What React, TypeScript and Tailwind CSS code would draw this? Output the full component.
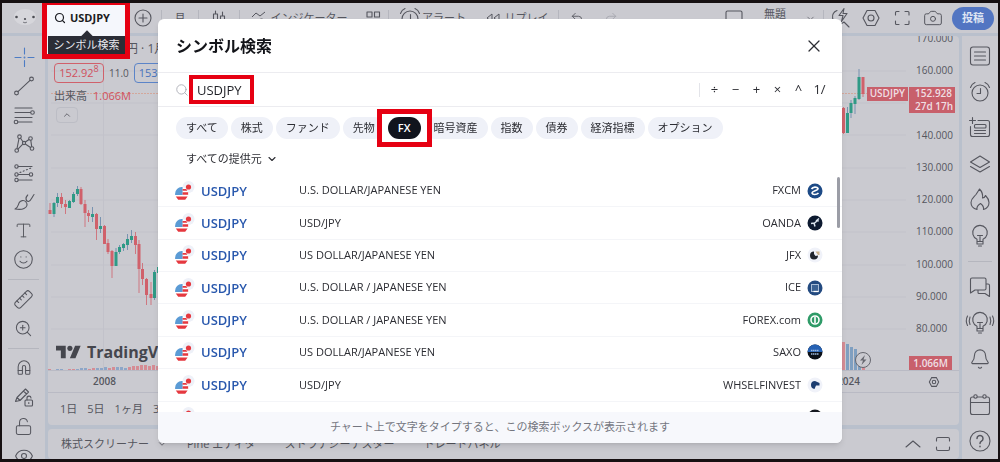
import React, { useState } from "react";
import {
  Bell,
  Camera,
  ChevronDown,
  ChevronUp,
  Eye,
  LockOpen,
  Magnet,
  Redo2,
  Ruler,
  Search,
  Smile,
  Type,
  Undo2,
  X,
  ZoomIn,
} from "lucide-react";

type IconProps = { children: React.ReactNode; className?: string };

const Icon = ({ children, className = "" }: IconProps) => (
  <svg
    width="24"
    height="24"
    viewBox="0 0 24 24"
    fill="none"
    stroke="currentColor"
    strokeWidth="1.1"
    strokeLinecap="round"
    strokeLinejoin="round"
    className={`shrink-0 ${className}`}
  >
    {children}
  </svg>
);

const hexagon = (
  <>
    <path d="M8 4.5h8l4 7.5-4 7.5H8L4 12z" />
    <circle cx="12" cy="12" r="3" />
  </>
);

const bulb = (
  <path d="M9 17.500v-2.200a7.300 7.300 0 1 1 6 0v2.200zM9 17.500V20h6v-2.500M10.500 22h3M12 17.500v-5M9.500 11.500h5" />
);

const alarm = (
  <>
    <circle cx="12" cy="13" r="8" />
    <path d="M12.5 8.5v5H9M2.5 7.5a8 8 0 0 1 4.5-5M21.5 7.5a8 8 0 0 0-4.5-5" />
  </>
);

const drawingTools = [
  {
    label: "十字カーソル",
    icon: (
      <Icon className="text-[#4d7cc4]">
        <path d="M12.5 3v6M12.5 15.5v6M3 12.5h6M16 12.5h6" />
        <circle cx="12.5" cy="12.5" r="0.4" />
      </Icon>
    ),
  },
  {
    label: "トレンドライン",
    icon: (
      <Icon>
        <circle cx="19.5" cy="5" r="1.9" />
        <circle cx="4.5" cy="19" r="1.9" />
        <path d="M6 17.6 18 6.4" />
      </Icon>
    ),
  },
  {
    label: "フィボナッチ",
    icon: (
      <Icon>
        <path d="M3 5h17M3 9.5h15.5M3 14.5h17M6 19h14" />
        <circle cx="20.5" cy="9.5" r="1.8" />
        <circle cx="4" cy="19" r="1.8" />
      </Icon>
    ),
  },
  {
    label: "パターン",
    icon: (
      <Icon>
        <circle cx="4.7" cy="18.5" r="1.8" />
        <circle cx="7.5" cy="4.7" r="1.8" />
        <circle cx="12" cy="11" r="1.6" />
        <circle cx="18.5" cy="6.5" r="1.8" />
        <circle cx="20" cy="16.5" r="1.8" />
        <path d="M5 16.7 7 6.5M8.5 6.2 11 9.7M13.4 10 17 7.5M18.8 8.3 19.7 14.7M6 17.2 10.8 12.2M13.3 12 18.5 15.5" />
      </Icon>
    ),
  },
  {
    label: "予測",
    icon: (
      <Icon>
        <circle cx="4.5" cy="5.5" r="1.7" />
        <circle cx="4.5" cy="13.5" r="1.7" />
        <circle cx="19" cy="13.5" r="1.7" />
        <circle cx="4.5" cy="19" r="1.7" />
        <path d="M6.2 5.5H20M6.2 13.5h11M6.2 19H20" />
        <path d="M8 11.5 19 7" strokeDasharray="1 2.5" />
      </Icon>
    ),
  },
  {
    label: "ブラシ",
    icon: (
      <Icon>
        <path d="M3 19c3-1 3-3.5 4-6 1-2.5 5-3.5 7-1s1 5-2 6.5S6 19.5 3 19zM14 8.5c0 2 1 3 2.5 3C19 11 20 7 22 4.5M14 9c0-1.5.7-3 1.7-4" />
      </Icon>
    ),
  },
  { label: "テキスト", icon: <Type size={19} strokeWidth={1.2} /> },
  { label: "アイコン", icon: <Smile size={21} strokeWidth={1.2} /> },
];

const measureTools = [
  { label: "ものさし", icon: <Ruler size={21} strokeWidth={1.2} className="-scale-x-100" /> },
  { label: "ズーム", icon: <ZoomIn size={19} strokeWidth={1.3} /> },
];

const lockTools = [
  { label: "マグネット", icon: <Magnet size={18} strokeWidth={1.4} className="-rotate-45" /> },
  {
    label: "描画モード",
    icon: (
      <Icon>
        <path d="M3.5 15.5 5 11.5 13.5 3l3 3L8 14.5zM11.5 5l3 3M5 11.5l3 3" />
        <rect x="13" y="14" width="7.5" height="6" rx="1" />
        <path d="M15 14v-1.7a2 2 0 0 1 4-.3M16.8 16.6v.8" />
      </Icon>
    ),
  },
  { label: "ロック", icon: <LockOpen size={19} strokeWidth={1.3} /> },
  { label: "表示", icon: <Eye size={20} strokeWidth={1.3} /> },
];

const sideTools = [
  {
    label: "ウォッチリスト",
    icon: (
      <Icon>
        <rect x="2.5" y="3" width="19" height="18" rx="2.5" />
        <path d="M6.5 8h11M6.5 12h11M6.5 16h11" />
      </Icon>
    ),
  },
  { label: "アラート", icon: <Icon>{alarm}</Icon> },
  {
    label: "データ",
    icon: (
      <Icon>
        <path d="M4.5 1.5v6M1.5 4.5h6M10 4.5h9.5a2 2 0 0 1 2 2v12a2 2 0 0 1-2 2h-15a2 2 0 0 1-2-2V10.500" />
        <rect x="6.5" y="8.5" width="11.5" height="3.5" rx="1" />
        <path d="M6.5 14.5h11M6.5 17.5h11" />
      </Icon>
    ),
  },
  {
    label: "レイヤー",
    icon: (
      <Icon>
        <path d="M12 4 21.5 10 12 15.5 2.5 10zM2.5 14.5 12 20l9.5-5.5" />
      </Icon>
    ),
  },
  {
    label: "ホットリスト",
    icon: (
      <Icon>
        <path d="M9 21.5C5 20.5 3 17.5 3 14.5c0-4 3-5.5 5-8 1-1.5 2-3 3.500-5.500C14.5 4 15 7 14.5 10c1.5 0 2.5-1 3-2.5C20 10 21 12 21 14.5c0 3.5-2 6-5.5 7 .5-2.5-1-4.500-3-6-2.500 1.500-4 3.500-3.500 6z" />
      </Icon>
    ),
  },
  { label: "アイデア", icon: <Icon>{bulb}</Icon> },
];

const socialTools = [
  {
    label: "チャット",
    icon: (
      <Icon>
        <path d="M4 3h12.5a1.5 1.5 0 0 1 1.5 1.5v9a1.5 1.5 0 0 1-1.5 1.5H7L2.500 18V4.500A1.500 1.500 0 0 1 4 3zM10 15v2.500a1 1 0 0 0 1 1h6l4.500 3V10.500a1.500 1.500 0 0 0-1.500-1.500h-2" />
      </Icon>
    ),
  },
  {
    label: "配信",
    icon: (
      <Icon className="overflow-visible">
        {bulb}
        <path d="M2 6c-1 2.500-1 5 0 7.500M-.5 5c-1.500 3-1.500 6.500 0 9.500M22 6c1 2.500 1 5 0 7.500M24.500 5c1.500 3 1.500 6.500 0 9.500" />
      </Icon>
    ),
  },
  { label: "通知", icon: <Bell size={22} strokeWidth={1.2} /> },
];

const helpTools = [
  {
    label: "カレンダー",
    icon: (
      <Icon>
        <rect x="2.5" y="4" width="19" height="17.5" rx="2" />
        <path d="M2.5 9.5h19" />
        <circle cx="7.5" cy="3.5" r="1.7" fill="#cacad0" />
        <circle cx="16.5" cy="3.5" r="1.7" fill="#cacad0" />
      </Icon>
    ),
  },
  {
    label: "ヘルプ",
    icon: (
      <Icon>
        <circle cx="12" cy="12" r="10" />
        <path d="M9 9.5a3 3 0 1 1 4.5 2.6c-1 .6-1.5 1-1.5 2.4M12 17.3v.4" strokeWidth="1.5" />
      </Icon>
    ),
  },
];

// [x, high, bodyTop, bodyBottom, low, up]
type Candle = [number, number, number, number, number, boolean];

const earlyCandles: Candle[] = [
  [50, 203, 210, 214, 214, false],
  [54, 202, 203, 214, 217, true],
  [57.5, 193, 197, 203, 207, true],
  [61.5, 193, 197, 204, 208, false],
  [65.5, 200, 204, 207, 214, false],
  [69.5, 200, 201, 208, 208, true],
  [73.5, 192, 194, 202, 203, true],
  [77.5, 186, 189, 194, 196, true],
  [81, 187, 189, 204, 205, false],
  [85, 200, 204, 213, 227, false],
  [88.5, 210, 213, 216, 222, false],
  [92.5, 207, 214, 217, 222, true],
  [96.5, 213, 214, 229, 240, false],
  [100.5, 217, 226, 229, 233, true],
  [104.5, 225, 226, 244, 244, false],
  [108, 239, 243, 252, 254, false],
  [112, 250, 251, 266, 278, false],
  [116, 248, 252, 266, 266, true],
  [119.5, 245, 247, 252, 254, true],
  [123.5, 243, 244, 248, 251, true],
  [127.5, 234, 239, 245, 250, true],
  [131.5, 230, 236, 240, 243, true],
  [135.5, 232, 236, 245, 254, false],
  [139, 240, 244, 269, 293, false],
  [142.5, 263, 269, 279, 285, false],
  [146.5, 278, 279, 295, 305, false],
  [151, 282, 294, 298, 305, false],
  [154.5, 270, 272, 298, 300, true],
  [158.5, 260, 267, 273, 285, true],
];

const lateCandles: Candle[] = [
  [843.5, 107, 108, 133, 134, false],
  [847.5, 107, 113, 133, 133, true],
  [851, 100, 103, 113, 118, true],
  [855, 96, 98, 104, 114, true],
  [859, 69, 77, 99, 100, true],
  [863, 77, 77, 94, 97, false],
];

const earlyVolumes = [2, 1, 2, 2, 1, 2, 2, 2, 3, 3, 2, 3, 3, 3, 4, 3, 4, 4, 4, 3, 4, 5, 5, 6, 6, 5, 6, 5];
const lateVolumes = [29, 27, 24, 22, 13, 5];
const gridRows = [71, 103, 135, 168, 200, 232, 265, 297, 329];

const Candles = ({ data }: { data: Candle[] }) => (
  <>
    {data.map(([x, high, top, bottom, low, up]) => (
      <g key={x} fill={up ? "#2f9a86" : "#d0616b"} stroke="none">
        <rect x={x - 0.5} y={high} width="1" height={low - high} fill={up ? "#6385a8" : "#d0616b"} opacity="0.8" />
        <rect x={x - 1.5} y={top} width="3" height={bottom - top} />
      </g>
    ))}
  </>
);

const GridLines = ({ from, to }: { from: number; to: number }) => (
  <>
    {gridRows.map((y) => (
      <path key={y} d={`M${from} ${y}H${to}`} stroke="#c2c2ca" />
    ))}
    <path d={`M${from} 93.5H${to}`} stroke="#d3a79b" strokeDasharray="2 1" />
  </>
);

// the 150 level sits behind the current price tag
const prices = ["170.000", "160.000", "", "140.000", "130.000", "120.000", "110.000", "100.000", "90.000", "80.000"];

const categories = ["すべて", "株式", "ファンド", "先物", "FX", "暗号資産", "指数", "債券", "経済指標", "オプション"];

const operators = ["÷", "−", "+", "×", "^", "1/"];

const results = [
  {
    name: "U.S. DOLLAR/JAPANESE YEN",
    source: "FXCM",
    logo: (
      <>
        <circle cx="8" cy="8" r="7.5" fill="#1d4a86" />
        <path d="M4.5 6C6 3.5 10 3.5 11 5.500c.5 2-6 2.500-6 4.500.5 2 4.500 2 6.500 0" stroke="#fff" strokeWidth="1.7" fill="none" />
      </>
    ),
  },
  {
    name: "USD/JPY",
    source: "OANDA",
    logo: (
      <>
        <circle cx="8" cy="8" r="7.5" fill="#0d1a30" />
        <path d="M4 8.500 7 8l1 3.500M7 8.500l3-2.500M9 6l3-2.500M10 4.500l1.500 2" stroke="#dbe4ee" strokeWidth="1.5" fill="none" />
      </>
    ),
  },
  {
    name: "US DOLLAR/JAPANESE YEN",
    source: "JFX",
    logo: (
      <>
        <circle cx="8" cy="8" r="7.5" fill="#f0f2f9" />
        <path d="M7 4.5a4 4 0 1 0 4 4L8.5 9 7 7z" fill="#20242c" />
        <path d="M8.5 4.5h4V8H11z" fill="#cbb28d" />
      </>
    ),
  },
  {
    name: "U.S. DOLLAR / JAPANESE YEN",
    source: "ICE",
    logo: (
      <>
        <circle cx="8" cy="8" r="7.5" fill="#234a80" />
        <rect x="4.5" y="4.5" width="7" height="7" fill="#3c6293" stroke="#a9bdd6" />
        <path d="M6.5 11.5h5" stroke="#fff" strokeWidth="1.3" />
      </>
    ),
  },
  {
    name: "U.S. DOLLAR / JAPANESE YEN",
    source: "FOREX.com",
    logo: (
      <>
        <circle cx="8" cy="8" r="7.5" fill="#2f9b68" />
        <circle cx="8" cy="8" r="4" fill="none" stroke="#fff" strokeWidth="1.6" />
        <path d="M8 5v6" stroke="#fff" strokeWidth="1.6" />
      </>
    ),
  },
  {
    name: "US DOLLAR/JAPANESE YEN",
    source: "SAXO",
    logo: (
      <>
        <circle cx="8" cy="8" r="7.5" fill="#0b1018" />
        <path d="M.5 8a7.5 7.5 0 0 1 15 0z" fill="#2662b4" />
        <path d="M4 6.5h8M4 10h8" stroke="#9db9de" strokeWidth="1.3" strokeDasharray="1.5 .5" />
      </>
    ),
  },
  {
    name: "USD/JPY",
    source: "WHSELFINVEST",
    logo: (
      <>
        <circle cx="8" cy="8" r="7.5" fill="#f0f2f9" />
        <path d="M4 8a4 4 0 0 1 4-4l4.5 2v2.5H9L7.500 12A4 4 0 0 1 4 8z" fill="#1c3d70" />
      </>
    ),
  },
  { name: "", source: "", logo: <circle cx="8" cy="8" r="7.5" fill="#15181f" /> },
];

const Flags = () => (
  <svg width="20" height="20" viewBox="0 0 20 20" className="block">
    <circle cx="13.5" cy="6" r="6" fill="#eef1f8" />
    <circle cx="13.5" cy="6" r="2.6" fill="#e5383f" />
    <circle cx="6.7" cy="12.7" r="6.6" fill="#fff" />
    <path d="M6.700 6.100a6.600 6.600 0 0 0-6.600 6.600V14h7.500V6.100z" fill="#5b9bd5" />
    <path d="M7.600 8h3.700l1 1.800H7.600zM7.600 11.200h5.500l.1 2.600H7.600zM.8 15.500h11.800l-2.400 3.200H3.200z" fill="#e5383f" />
  </svg>
);

type Tool = { label: string; icon: React.ReactNode };

const ToolList = ({ tools, wide }: { tools: Tool[]; wide?: boolean }) => (
  <div className="flex shrink-0 flex-col">
    {tools.map((tool) => (
      <button
        key={tool.label}
        aria-label={tool.label}
        className={`flex items-center justify-center ${wide ? "h-9" : "h-[29px]"}`}
      >
        {tool.icon}
      </button>
    ))}
  </div>
);

const HeaderDivider = () => <div className="h-4 w-px shrink-0 bg-[#b5b6be]" />;

const Header = () => (
  <header className="flex h-[30px] shrink-0 items-center bg-[#cacad0]">
    <div className="flex w-[46px] shrink-0 justify-center">
      <svg width="24" height="20" viewBox="0 0 24 20">
        <ellipse cx="12" cy="9" rx="11" ry="8" fill="#d6d6db" />
        <circle cx="3.5" cy="9" r="1.3" fill="#4b4c53" />
        <circle cx="20.5" cy="9" r="1.3" fill="#4b4c53" />
        <circle cx="12" cy="11" r="1.1" fill="#4b4c53" />
        <path d="M10 14c1 1 3 1 4 0" stroke="#77787f" fill="none" />
      </svg>
    </div>
    <div className="relative z-10 h-full w-[77px] shrink-0">
      <div className="absolute -left-1.5 -top-[3px] h-[59px] w-[88px] border-5 border-[#e60012] bg-[#f5f7fc]" />
      <button className="relative flex h-full items-center gap-1 pl-1.5 text-[11px] font-bold text-[#1b1c22]">
        <Search size={12} strokeWidth={2.4} />
        USDJPY
      </button>
      <div
        role="tooltip"
        className="absolute left-0 top-[33px] flex h-[18px] w-full items-center justify-center whitespace-nowrap bg-[#2b2d36] text-[11px] text-[#e8e9ee]"
      >
        <span className="absolute -top-1 h-2 w-2 rotate-45 bg-[#2b2d36]" />
        <span className="relative">シンボル検索</span>
      </div>
    </div>
    <button aria-label="比較" className="flex w-9 shrink-0 justify-center">
      <Icon>
        <circle cx="12" cy="12" r="8" />
        <path d="M12 8v8M8 12h8" />
      </Icon>
    </button>
    <HeaderDivider />
    <button className="w-9 shrink-0">月</button>
    <HeaderDivider />
    <button aria-label="ローソク足" className="flex w-10 shrink-0 justify-center">
      <Icon>
        <path d="M6.5 8h4v9h-4zM13.5 10h4v6h-4zM8.5 5v3M8.5 17v3M15.5 6v4M15.5 16v3" />
      </Icon>
    </button>
    <HeaderDivider />
    <button className="flex w-[118px] shrink-0 items-center justify-center gap-1">
      <svg width="16" height="16" viewBox="0 0 16 16" fill="none" stroke="currentColor">
        <path d="M1 7 5 3l4 3 5-4M7 12c2-4 5-4 7 0" />
      </svg>
      インジケーター
    </button>
    <button aria-label="レイアウト" className="flex w-[30px] shrink-0 justify-center">
      <Icon>
        <path d="M6 6h5v5H6zM13.5 6h5v5h-5zM6 14h5v5H6zM13.5 14h5v5h-5z" />
      </Icon>
    </button>
    <HeaderDivider />
    <button className="flex w-[86px] shrink-0 items-center justify-center">
      <Icon>{alarm}</Icon>
      アラート
    </button>
    <button className="flex w-[83px] shrink-0 items-center justify-center gap-1">
      <svg width="16" height="16" viewBox="0 0 16 16" fill="none" stroke="currentColor">
        <path d="M7 4v8L2 8zM14 4v8L9 8z" />
      </svg>
      リプレイ
    </button>
    <HeaderDivider />
    <button aria-label="元に戻す" className="flex w-9 shrink-0 justify-center">
      <Undo2 size={14} strokeWidth={1.5} />
    </button>
    <button aria-label="やり直す" className="flex w-8 shrink-0 justify-center text-[#a5a6ae]">
      <Redo2 size={14} strokeWidth={1.5} />
    </button>
    <div className="ml-auto flex shrink-0 items-center pr-1">
      <button aria-label="画面" className="flex w-9 justify-center">
        <Icon>
          <rect x="4" y="5" width="16" height="14" rx="1.5" />
        </Icon>
      </button>
      <button className="w-[46px] pb-2">無題</button>
      <button aria-label="レイアウト一覧" className="flex w-[25px] justify-center">
        <ChevronDown size={11} strokeWidth={1.5} />
      </button>
      <HeaderDivider />
      <button aria-label="クイック検索" className="flex w-[31px] justify-center">
        <Icon>
          <path d="M9 4.5a7 7 0 0 0 2 13.5c2 0 3.5-.5 5-2l5 5M16 2.5l-5 7h4l-1.5 6 5.500-8h-4z" />
        </Icon>
      </button>
      <button aria-label="設定" className="flex w-[31px] justify-center">
        <Icon>{hexagon}</Icon>
      </button>
      <button aria-label="全画面" className="flex w-[31px] justify-center">
        <Icon>
          <path d="M5.5 9V6.5a1 1 0 0 1 1-1H9M15 5.5h3a1 1 0 0 1 1 1V9M19 15v2.5a1 1 0 0 1-1 1h-3M9 18.5H6.5a1 1 0 0 1-1-1V15" />
        </Icon>
      </button>
      <button aria-label="スナップショット" className="mr-1 flex w-[31px] justify-center">
        <Camera size={20} strokeWidth={1.2} />
      </button>
      <button className="h-[23px] w-[42px] rounded-full bg-[#5275c2] font-bold text-[#dfe5f3]">投稿</button>
    </div>
  </header>
);

const Chart = () => (
  <section className="flex min-h-0 flex-1 flex-col overflow-hidden rounded-sm bg-[#cacad0]">
    <div className="relative flex min-h-0 flex-1 overflow-hidden border-b border-[#b9bac4]">
      <div className="flex min-w-0 flex-1 justify-between">
        <svg width="112" height="335" viewBox="48 36 112 335" className="shrink-0">
          <GridLines from={51} to={160} />
          <path d="M103.5 40V371" stroke="#c2c2ca" />
          {earlyVolumes.map((v, i) => (
            <rect key={i} x={48 + i * 4} y={371 - v} width="3" height={v} fill={i % 5 < 2 || i > 21 ? "#d58c94" : "#8da6c8"} />
          ))}
          <Candles data={earlyCandles} />
        </svg>
        <svg width="66" height="335" viewBox="842 36 66 335" className="shrink-0">
          <GridLines from={842} to={906} />
          {lateVolumes.map((v, i) => (
            <rect key={i} x={842 + i * 4} y={371 - v} width="3" height={v} fill={i === 0 || i === 5 ? "#d58c94" : "#7f9fc0"} />
          ))}
          <Candles data={lateCandles} />
          <circle cx="863" cy="360" r="7.5" fill="#cacad0" stroke="#66676f" />
          <path d="m865 355-5 5.5h3l-1.5 4.5 5-5.500h-3z" fill="#66676f" />
        </svg>
      </div>
      <ul className="-mt-3.5 flex h-[323px] w-[51px] shrink-0 flex-col pl-2 text-[10px]">
        {prices.map((price, index) => (
          <li key={index} className="flex flex-1 items-center">
            {price}
          </li>
        ))}
      </ul>
      <div className="absolute right-1 top-[51px] flex items-start text-[10px] font-semibold leading-[13px] text-[#efdfe3]">
        <span className="mr-px h-[14px] bg-[#c8606b] px-[3px]">USDJPY</span>
        <span className="w-[46px] bg-[#c8606b] pl-1.5">
          152.928
          <br />
          27d 17h
        </span>
      </div>
      <span className="absolute bottom-0 right-[7px] h-[14px] w-[43px] bg-[#c8606b] pr-1 text-right text-[10px] font-semibold leading-[14px] text-[#efdfe3]">
        1.066M
      </span>
      <div className="absolute left-0 top-0 flex flex-col pl-1.5">
        <h2 className="pl-[72px] pt-1 text-xs leading-[18px]">円 · 1月</h2>
        <div className="flex items-center gap-[5px] pt-[5px] text-[11px]">
          <span className="flex h-5 w-[50px] items-center justify-center rounded-sm border border-[#d0616b] text-[#d0505c]">
            152.92<sup className="text-[9px]">8</sup>
          </span>
          <span className="w-5 text-[10px]">11.0</span>
          <span className="flex h-5 w-[50px] items-center justify-center rounded-sm border border-[#5b84c8] text-[#4672bd]">
            153.038
          </span>
        </div>
        <p className="flex gap-1.5 pt-1 text-[11px] leading-[18px]">
          出来高 <span className="text-[#d0505c]">1.066M</span>
        </p>
        <button
          aria-label="凡例を閉じる"
          className="ml-0.5 mt-0.5 flex h-4 w-[22px] items-center justify-center rounded-sm border border-[#bcbdc5]"
        >
          <ChevronUp size={10} strokeWidth={2} />
        </button>
      </div>
      <div className="absolute bottom-2 left-2 flex items-center gap-1.5 text-base font-bold leading-5 text-[#45464d]">
        <svg width="25" height="14" viewBox="0 0 36 20" fill="currentColor">
          <path d="M14 19H7V8H0V1h14zM28 19h-8l7.5-18h8z" />
          <circle cx="20" cy="4.7" r="3.7" />
        </svg>
        TradingView
      </div>
    </div>
    <div className="flex h-[22px] shrink-0 items-center border-b border-[#b9bac4] pl-[45px] pr-[18px] text-[10px] font-semibold">
      <span>2008</span>
      <span className="ml-auto mr-[67px]">2024</span>
      <svg width="14" height="14" viewBox="0 0 24 24" fill="none" stroke="currentColor" strokeWidth="1.8">
        {hexagon}
      </svg>
    </div>
    <div className="flex h-8 shrink-0 items-center gap-2.5 pl-3">
      {["1日", "5日", "1ヶ月", "3ヶ月"].map((period) => (
        <button key={period}>{period}</button>
      ))}
    </div>
  </section>
);

const BottomBar = () => (
  <footer className="flex h-[30px] shrink-0 items-center rounded-sm bg-[#cacad0] pl-[13px] pr-1">
    <button>株式スクリーナー</button>
    <ChevronDown size={10} className="ml-2" />
    <button className="ml-5">Pine エディタ</button>
    <button className="ml-[29px]">ストラテジーテスター</button>
    <button className="ml-[29px]">トレードパネル</button>
    <button aria-label="パネルを開く" className="ml-auto mr-1.5">
      <Icon>
        <path d="m5 15 7-6 7 6" />
      </Icon>
    </button>
    <button aria-label="パネルを最大化">
      <Icon>
        <path d="M5.5 9V7a1.5 1.5 0 0 1 1.5-1.5h10A1.5 1.5 0 0 1 18.5 7v2M18.5 15v2a1.5 1.5 0 0 1-1.5 1.5H7A1.5 1.5 0 0 1 5.5 17v-2" />
      </Icon>
    </button>
  </footer>
);

const SearchDialog = () => {
  const [query, setQuery] = useState("USDJPY");
  const [category, setCategory] = useState("FX");

  return (
    <div
      role="dialog"
      aria-label="シンボル検索"
      className="flex h-full flex-col overflow-hidden rounded-md bg-white text-[#2c2d33] shadow-md"
    >
      <div className="flex h-[54px] shrink-0 items-center justify-between border-b border-[#ececf0] px-[18px]">
        <h1 className="text-base font-bold text-[#131419]">シンボル検索</h1>
        <button aria-label="閉じる">
          <X size={20} strokeWidth={1.5} />
        </button>
      </div>
      <div className="flex h-[34px] shrink-0 items-center border-b border-[#ececf0] pl-[17px] pr-3">
        <Search size={14} strokeWidth={1.5} className="shrink-0 text-[#a9abb4]" />
        <input
          aria-label="シンボル"
          value={query}
          onChange={(e) => setQuery(e.target.value)}
          className="h-[29px] w-[65px] border-4 border-[#e60012] bg-white px-1 text-[13px] text-[#1f2026] outline-none"
        />
        <div className="ml-auto flex h-[14px] items-center border-l border-[#e3e4e9] pl-1">
          {operators.map((op) => (
            <button key={op} className="w-[21px] text-center text-[13px]">
              {op}
            </button>
          ))}
        </div>
      </div>
      <div className="flex shrink-0 gap-[3px] pl-[18px] pt-[10px]">
        {categories.map((item) => (
          <button
            key={item}
            onClick={() => setCategory(item)}
            className={`h-[22px] whitespace-nowrap rounded-full px-2.5 ${
              item === category ? "relative z-10" : "bg-[#eff1f8]"
            }`}
          >
            {item === category ? (
              <>
                <span className="absolute -inset-x-[11px] -inset-y-2 border-5 border-[#e60012] bg-white" />
                <span className="absolute inset-0 rounded-full bg-[#11141d]" />
                <span className="relative font-semibold text-white">{item}</span>
              </>
            ) : (
              item
            )}
          </button>
        ))}
      </div>
      <button className="flex h-9 shrink-0 items-center gap-1 pl-7 pt-1 text-[11px]">
        すべての提供元
        <ChevronDown size={12} strokeWidth={2.2} />
      </button>
      <div className="relative min-h-0 flex-1 overflow-hidden">
        <table className="h-[259px] w-full">
          <tbody>
            {results.map((row, index) => (
              <tr key={index} className="border-b border-[#f4f5f8]">
                <td className="w-[43px] pl-[17px]">
                  <Flags />
                </td>
                <td className="w-[98px] text-[13px] font-semibold leading-5 text-[#2958ad]">{row.name && "USDJPY"}</td>
                <td className="text-[11px]">{row.name}</td>
                <td className="pr-1.5 text-right text-[11px]">{row.source}</td>
                <td className="w-[35px]">
                  <svg width="16" height="16" viewBox="0 0 16 16" className="block">
                    {row.logo}
                  </svg>
                </td>
              </tr>
            ))}
          </tbody>
        </table>
        <div className="absolute right-0.5 top-0.5 h-[51px] w-[3px] rounded-full bg-[#9b9da6]" />
      </div>
      <p className="flex h-[31px] shrink-0 items-center justify-center bg-[#f7f8fc] text-[11px] text-[#74767f]">
        チャート上で文字をタイプすると、この検索ボックスが表示されます
      </p>
    </div>
  );
};

const App = () => {
  return (
    <div className="relative flex h-screen flex-col overflow-hidden border-x-2 border-b-3 border-t-3 border-[#161012] bg-[#b9c0cc] font-['Open_Sans','Noto_Sans_CJK_JP',sans-serif] text-[11px] text-[#55565e]">
      <Header />
      <div className="flex min-h-0 flex-1 gap-[3px] pt-[3px]">
        <nav className="w-[43px] shrink-0 overflow-hidden bg-[#cacad0] pt-1.5">
          <ToolList tools={drawingTools} />
          <hr className="mx-1.5 my-[5px] border-[#b5b6be]" />
          <ToolList tools={measureTools} />
          <hr className="mx-1.5 my-[5px] border-[#b5b6be]" />
          <ToolList tools={lockTools} />
        </nav>
        <main className="flex min-w-0 flex-1 flex-col gap-1">
          <Chart />
          <BottomBar />
        </main>
        <nav className="flex w-9 shrink-0 flex-col overflow-hidden bg-[#cacad0] pt-0.5">
          <ToolList tools={sideTools} wide />
          <hr className="mx-1.5 my-[7px] border-[#b5b6be]" />
          <ToolList tools={socialTools} wide />
          <div className="mt-auto">
            <ToolList tools={helpTools} wide />
          </div>
        </nav>
      </div>
      <div className="fixed inset-0 px-[158px] py-[19px]">
        <SearchDialog />
      </div>
    </div>
  );
};

export default App;
